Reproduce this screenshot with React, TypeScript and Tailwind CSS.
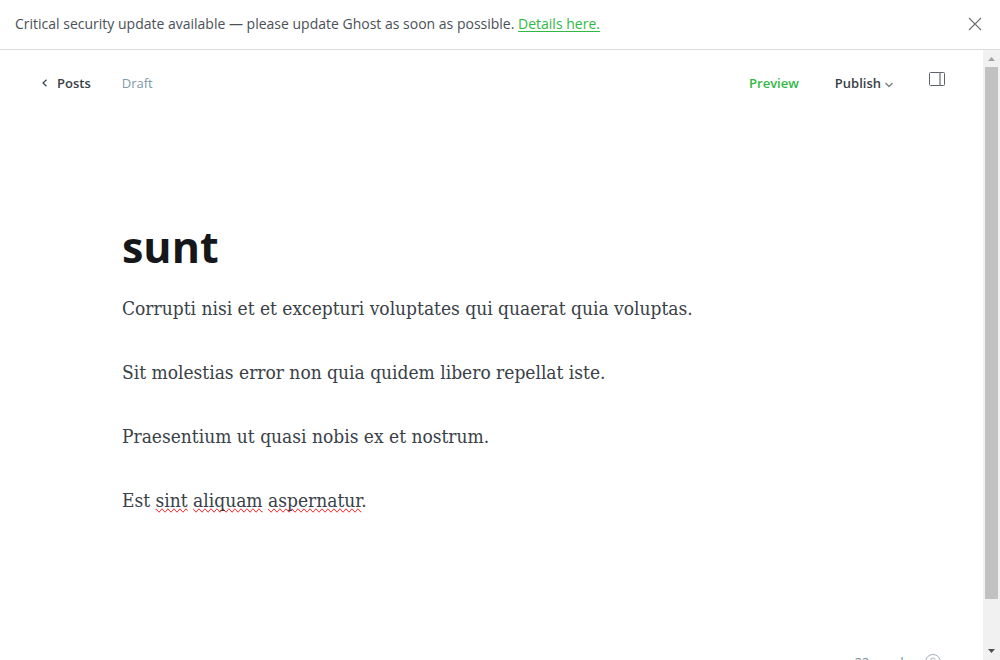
import React from "react";

const paragraphs = [
  "Corrupti nisi et et excepturi voluptates qui quaerat quia voluptas.",
  "Sit molestias error non quia quidem libero repellat iste.",
  "Praesentium ut quasi nobis ex et nostrum.",
];

function Misspelled({ children }: { children: React.ReactNode }) {
  return <span className="[text-decoration-line:spelling-error]">{children}</span>;
}

function UpdateBanner() {
  return (
    <aside className="flex h-[50px] shrink-0 items-center justify-between border-b border-[#dddddd] pr-[18px] pb-px pl-[15px]">
      <p className="text-[14px] leading-5 text-[#4a5057]">
        Critical security update available — please update Ghost as soon as possible.{" "}
        <a href="#details" className="text-[#30b843] underline underline-offset-2">
          Details here.
        </a>
      </p>
      <button type="button" aria-label="Close" className="size-[14px]">
        <svg viewBox="0 0 14 14" className="size-[14px]" fill="none" stroke="#6a6f75" strokeWidth="1.1">
          <path d="M1 1l12 12M13 1L1 13" />
        </svg>
      </button>
    </aside>
  );
}

function EditorHeader() {
  return (
    <header className="flex h-[66px] shrink-0 items-center justify-between pr-[38px] pl-[41px] text-[13px] leading-5">
      <div className="flex items-center">
        <a href="#posts" className="flex items-center gap-2 font-semibold text-[#394047]">
          <svg viewBox="0 0 8 8" className="size-2" fill="none" stroke="#394047" strokeWidth="1.2">
            <path d="M5.5 0.7L2 4l3.500 3.300" />
          </svg>
          Posts
        </a>
        <span className="ml-[31px] text-[#8099a8]">Draft</span>
      </div>
      <div className="flex items-center">
        <button type="button" className="font-semibold text-[#30b843]">
          Preview
        </button>
        <button type="button" className="ml-9 flex items-center gap-1 font-semibold text-[#394047]">
          Publish
          <svg viewBox="0 0 8 6" className="mt-1 h-[6px] w-2" fill="none" stroke="#7c8187" strokeWidth="1.500">
            <path d="M0.500 1L4 4.500L7.500 1" />
          </svg>
        </button>
        <button type="button" aria-label="Settings" className="mb-2 ml-9">
          <svg viewBox="0 0 16 14" className="h-[14px] w-4" fill="none" stroke="#5d6268">
            <rect x="0.500" y="0.500" width="15" height="13" rx="1" />
            <path d="M11 0.500v13" stroke="#83888e" strokeWidth="1.500" />
          </svg>
        </button>
      </div>
    </header>
  );
}

function Scrollbar() {
  return (
    <div aria-hidden="true" className="flex w-[17px] shrink-0 flex-col items-center bg-[#f1f1f1]">
      <svg viewBox="0 0 17 17" className="size-[17px]">
        <path d="M5 11h7L8.500 7z" fill="#a3a3a3" />
      </svg>
      <div className="flex min-h-0 w-[13px] flex-1 flex-col">
        <div className="h-[92.400%] bg-[#c1c1c1]" />
      </div>
      <svg viewBox="0 0 17 17" className="size-[17px]">
        <path d="M5 6h7L8.500 10z" fill="#505050" />
      </svg>
    </div>
  );
}

export default function App() {
  return (
    <div className="flex h-screen flex-col overflow-hidden bg-white font-['Open_Sans',sans-serif]">
      <UpdateBanner />
      <div className="flex min-h-0 flex-1">
        <main className="flex min-w-0 flex-1 flex-col overflow-hidden">
          <EditorHeader />
          <div className="shrink-0 px-[122px] pt-24">
            <input
              aria-label="Post title"
              defaultValue="sunt"
              spellCheck={false}
              className="block h-[68px] w-full text-[43px] font-bold text-[#15171a] outline-none"
            />
            <div className="mt-3 flex flex-col gap-8 font-['DejaVu_Serif_Condensed','DejaVu_Serif',serif] text-[19px] leading-8 text-[#394047]">
              {paragraphs.map((text) => (
                <p key={text}>{text}</p>
              ))}
              <p>
                Est <Misspelled>sint</Misspelled> <Misspelled>aliquam</Misspelled>{" "}
                <Misspelled>aspernatur</Misspelled>.
              </p>
            </div>
          </div>
          <footer className="mt-[136px] flex shrink-0 items-center justify-end gap-[15px] pr-[42px] text-[13px] leading-5 text-[#7c8b9a]">
            <span>22 words</span>
            <a href="#help" aria-label="Help">
              <svg viewBox="0 0 16 16" className="size-4" fill="none" stroke="#a5afb9">
                <circle cx="8" cy="8" r="7.500" />
                <path d="M5.800 6.200a2.200 2.200 0 1 1 3.200 2c-.7.400-1 .8-1 1.600M8 11.300v1" />
              </svg>
            </a>
          </footer>
        </main>
        <Scrollbar />
      </div>
    </div>
  );
}
